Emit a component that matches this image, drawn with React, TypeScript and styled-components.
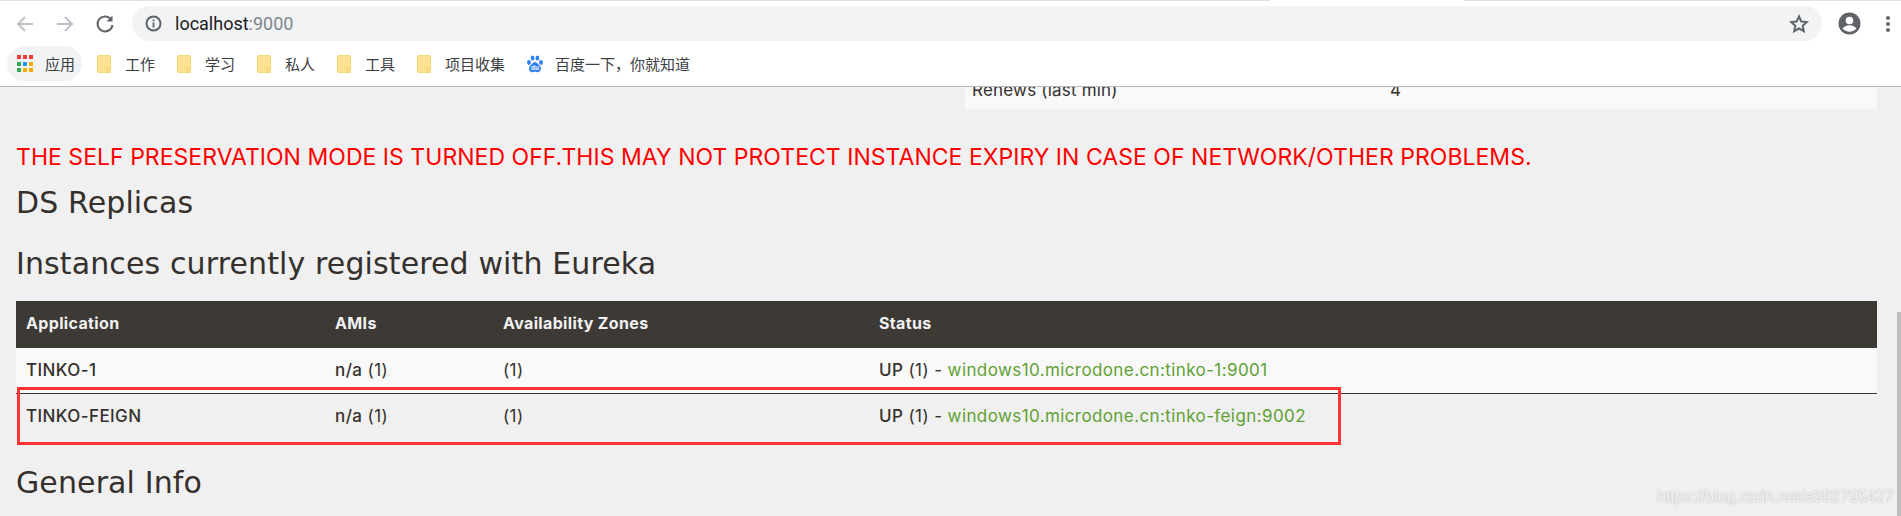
import React from "react";
import styled, { createGlobalStyle } from "styled-components";

const GlobalStyle = createGlobalStyle`
html, body {
  margin: 0;
  padding: 0;
  height: 516px;
  overflow: hidden;
  background: #f0f0f0;
}
* { box-sizing: border-box; }
`;

const Screen = styled.div`
  position: relative;
  width: 1901px;
  height: 516px;
  overflow: hidden;
  font-family: "Noto Sans", "Noto Sans CJK SC", sans-serif;
`;

const Chrome = styled.header`
  height: 87px;
  padding-top: 1px;
  background: linear-gradient(to right, #dee1e6 1270px, #fff 1270px, #fff 1464px, #dee1e6 1464px) top / 100% 1px no-repeat #fff;
  border-bottom: 1px solid #b8b8b8;
`;

const Toolbar = styled.div`
  display: flex;
  align-items: center;
  height: 35px;
  margin-top: 5px;
  padding-left: 14px;
`;

const NavIcon = styled.svg`
  flex: none;
  width: 22px;
  height: 22px;
  margin-right: 18px;
  fill: none;
  stroke: ${(p) => p.color || "#5f6368"};
  stroke-width: 2;
`;

const AddressBar = styled.div`
  display: flex;
  align-items: center;
  width: 1690px;
  height: 35px;
  margin-left: -2px;
  padding: 0 13px;
  background: #f1f3f4;
  border-radius: 18px;
  font-family: Roboto, sans-serif;
  font-size: 18px;
  color: #202124;
`;

const InfoIcon = styled.svg`
  flex: none;
  width: 17px;
  height: 17px;
`;

const Url = styled.span`
  margin-left: 13px;
  flex: 1;
`;

const Port = styled.span`
  color: #80868b;
`;

const Bookmarks = styled.div`
  display: flex;
  align-items: center;
  height: 35px;
  margin-top: 5px;
  padding-left: 7px;
  font-size: 15px;
  color: #3c4043;
`;

const AppsPill = styled.div`
  display: flex;
  align-items: center;
  gap: 12px;
  width: 75px;
  height: 35px;
  padding-left: 10px;
  margin-right: 15px;
  background: #f1f3f4;
  border-radius: 18px;
`;

const AppsGrid = styled.div`
  display: grid;
  grid-template-columns: repeat(3, 4px);
  grid-auto-rows: 4px;
  gap: 2.5px 2px;
  width: 16px;
`;

const AppsDot = styled.i<{ $c: string }>`
  display: block;
  background: ${(p) => p.$c};
`;

const Bookmark = styled.div`
  display: flex;
  align-items: center;
  gap: 14px;
  margin-right: 22px;
`;

const BaiduMark = styled(Bookmark)`
  gap: 12px;
`;

const Page = styled.main`
  padding: 0 24px 0 16px;
`;

const RenewsRow = styled.div`
  display: flex;
  align-items: flex-end;
  width: 912px;
  height: 22px;
  margin-left: auto;
  padding: 0 0 8px 7px;
  overflow: hidden;
  background: #f9f9f9;
  font-family: Inter, sans-serif;
  font-size: 17px;
  letter-spacing: 0.2px;
  line-height: 22px;
  color: #34302d;
`;

const RenewsLabel = styled.span`
  width: 418px;
`;

const Warning = styled.h3`
  margin: 35px 0 0;
  font-family: Inter, sans-serif;
  font-size: 23px;
  letter-spacing: 0.03px;
  line-height: 26px;
  font-weight: 400;
  color: #f00;
  white-space: nowrap;
`;

const Heading = styled.h2<{ $top: number }>`
  margin: ${(p) => p.$top}px 0 0;
  font-family: "DejaVu Sans", sans-serif;
  font-size: 30px;
  letter-spacing: 0.12px;
  line-height: 36px;
  font-weight: 400;
  color: #34302d;
`;

const Table = styled.div`
  margin-top: 19px;
`;

const Row = styled.div`
  display: grid;
  grid-template-columns: 309px 168px 376px 1fr;
  align-items: center;
  padding-left: 10px;
  font-family: Inter, sans-serif;
  font-size: 17px;
  letter-spacing: 0.4px;
  color: #34302d;
`;

const HeadRow = styled(Row)`
  height: 47px;
  padding-bottom: 3px;
  background: #3d3935;
  color: #f1f1f1;
  font-size: 16px;
  font-weight: 700;
  letter-spacing: 0.35px;
`;

const BodyRow = styled(Row)<{ $odd?: boolean }>`
  height: ${(p) => (p.$odd ? 46 : 43)}px;
  padding-bottom: ${(p) => (p.$odd ? 2 : 0)}px;
  background: ${(p) => (p.$odd ? "#f9f9f9" : "transparent")};
  border-bottom: ${(p) => (p.$odd ? "1px solid #34302d" : "none")};
`;

const AppName = styled.span`
  font-weight: 500;
`;

const Strong = styled.b`
  font-weight: 500;
`;

const Link = styled.a`
  color: #5fa134;
  text-decoration: none;
`;

const Highlight = styled.div`
  position: absolute;
  left: 17px;
  top: 387px;
  width: 1324px;
  height: 58px;
  border: 3px solid #f33;
  pointer-events: none;
`;

const ScrollThumb = styled.div`
  position: absolute;
  right: 0;
  top: 312px;
  bottom: 0;
  width: 4px;
  background: #bcbcbc;
`;

const Watermark = styled.div`
  position: absolute;
  left: 1657px;
  top: 486px;
  font-family: "Liberation Sans", sans-serif;
  font-size: 16px;
  line-height: 22px;
  color: rgba(255, 255, 255, 0.75);
  text-shadow: 0 0 2px rgba(120, 120, 120, 0.55);
  white-space: nowrap;
`;

const StarIcon = styled.svg`
  flex: none;
  width: 20px;
  height: 20px;
  fill: none;
  stroke: #5f6368;
  stroke-width: 2;
`;

const AvatarIcon = styled.svg`
  flex: none;
  width: 23px;
  height: 23px;
  margin-left: 16px;
`;

const DotsIcon = styled.svg`
  flex: none;
  width: 6px;
  height: 18px;
  margin-left: 24px;
`;

const appsColors = ["#ef3e36", "#ef3e36", "#ef3e36", "#34a853", "#2196f3", "#fbab00", "#34a853", "#fbab00", "#fbab00"];

const Folder = () => (
  <svg width="14" height="18" viewBox="0 0 14 18">
    <path d="M1.500 .5h11a1 1 0 0 1 1 1v13l-3 3h-9a1 1 0 0 1-1-1v-15a1 1 0 0 1 1-1z" fill="#fde293" stroke="#f7d774" />
    <rect x="10" y="13" width="4" height="5" rx="1" fill="#fde293" stroke="#f5cf60" />
  </svg>
);

const BaiduPaw = () => (
  <svg width="16" height="18" viewBox="0 0 16 18">
    <ellipse cx="2" cy="7.500" rx="1.900" ry="2.400" fill="#2e7ff2" />
    <ellipse cx="5.600" cy="3" rx="1.900" ry="2.600" fill="#2e7ff2" />
    <ellipse cx="10.400" cy="3" rx="1.900" ry="2.600" fill="#2e7ff2" />
    <ellipse cx="14" cy="7.500" rx="1.900" ry="2.400" fill="#2e7ff2" />
    <path d="M8 7c2.200 0 2.800 2.400 4.600 3.600 1.900 1.400 2.100 6.400-1.800 6.600-1.300 0-1.800-.5-2.800-.5s-1.500.5-2.800.5c-3.900-.2-3.700-5.200-1.800-6.600C5.200 9.400 5.800 7 8 7z" fill="#2e7ff2" />
    <text x="8" y="15" textAnchor="middle" fontSize="6.500" fontWeight="700" fill="#fff" fontFamily="Liberation Sans, sans-serif">du</text>
  </svg>
);

const bookmarks = ["工作", "学习", "私人", "工具", "项目收集"];

function App() {
  return (
    <Screen>
      <GlobalStyle />
      <Chrome>
        <Toolbar>
          <NavIcon viewBox="0 0 22 22" color="#bdc1c6">
            <path d="M19 11H4M11 4l-7 7 7 7" />
          </NavIcon>
          <NavIcon viewBox="0 0 22 22" color="#bdc1c6">
            <path d="M3 11h15M11 4l7 7-7 7" />
          </NavIcon>
          <NavIcon viewBox="0 0 22 22">
            <path d="M17.500 7A7.500 7.500 0 1 0 18.500 12" />
            <path d="M18.500 2.500v6h-6z" fill="#5f6368" stroke="none" />
          </NavIcon>
          <AddressBar>
            <InfoIcon viewBox="0 0 17 17">
              <circle cx="8.500" cy="8.500" r="7" fill="none" stroke="#5f6368" strokeWidth="2" />
              <rect x="7.600" y="7.500" width="1.800" height="5" fill="#5f6368" />
              <rect x="7.600" y="4.500" width="1.800" height="1.800" fill="#5f6368" />
            </InfoIcon>
            <Url>
              localhost<Port>:9000</Port>
            </Url>
            <StarIcon viewBox="0 0 20 20">
              <path d="M10 2.500l2.300 5 5.400.6-4 3.700 1.100 5.400L10 14.500l-4.800 2.700 1.100-5.400-4-3.700 5.400-.6z" />
            </StarIcon>
          </AddressBar>
          <AvatarIcon viewBox="0 0 23 23">
            <circle cx="11.500" cy="11.500" r="11" fill="#5f6368" />
            <circle cx="11.500" cy="8.500" r="3.800" fill="#fff" />
            <path d="M4.500 16.500c2-2.600 4.500-3.300 7-3.300s5 .7 7 3.300c-1.700 2-4.200 3.200-7 3.200s-5.300-1.200-7-3.200z" fill="#fff" />
          </AvatarIcon>
          <DotsIcon viewBox="0 0 6 18">
            <circle cx="3" cy="3" r="2" fill="#5f6368" />
            <circle cx="3" cy="9" r="2" fill="#5f6368" />
            <circle cx="3" cy="15" r="2" fill="#5f6368" />
          </DotsIcon>
        </Toolbar>
        <Bookmarks>
          <AppsPill>
            <AppsGrid>
              {appsColors.map((c, i) => (
                <AppsDot key={i} $c={c} />
              ))}
            </AppsGrid>
            <span>应用</span>
          </AppsPill>
          {bookmarks.map((name) => (
            <Bookmark key={name}>
              <Folder />
              <span>{name}</span>
            </Bookmark>
          ))}
          <BaiduMark>
            <BaiduPaw />
            <span>百度一下，你就知道</span>
          </BaiduMark>
        </Bookmarks>
      </Chrome>
      <Page>
        <RenewsRow>
          <RenewsLabel>Renews (last min)</RenewsLabel>
          <span>4</span>
        </RenewsRow>
        <Warning>THE SELF PRESERVATION MODE IS TURNED OFF.THIS MAY NOT PROTECT INSTANCE EXPIRY IN CASE OF NETWORK/OTHER PROBLEMS.</Warning>
        <Heading $top={15}>DS Replicas</Heading>
        <Heading $top={25}>Instances currently registered with Eureka</Heading>
        <Table>
          <HeadRow>
            <span>Application</span>
            <span>AMIs</span>
            <span>Availability Zones</span>
            <span>Status</span>
          </HeadRow>
          <BodyRow $odd>
            <AppName>TINKO-1</AppName>
            <span><Strong>n/a</Strong> (1)</span>
            <span>(1)</span>
            <span><Strong>UP</Strong> (1) - <Link>windows10.microdone.cn:tinko-1:9001</Link></span>
          </BodyRow>
          <BodyRow>
            <AppName>TINKO-FEIGN</AppName>
            <span><Strong>n/a</Strong> (1)</span>
            <span>(1)</span>
            <span><Strong>UP</Strong> (1) - <Link>windows10.microdone.cn:tinko-feign:9002</Link></span>
          </BodyRow>
        </Table>
        <Heading $top={28}>General Info</Heading>
      </Page>
      <Highlight />
      <ScrollThumb />
      <Watermark>https://blog.csdn.net/a992795427</Watermark>
    </Screen>
  );
}

export default App;
